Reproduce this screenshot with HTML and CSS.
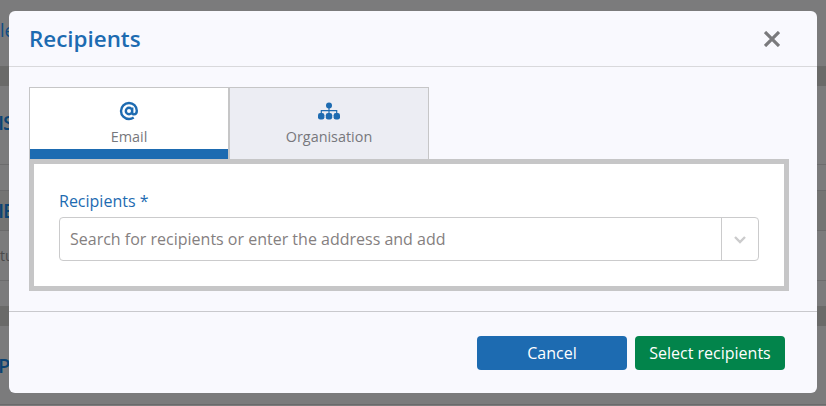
FILE: index.html
```html
<!DOCTYPE html>
<html lang="en">
<head>
<meta charset="utf-8">
<title>Recipients</title>
<link rel="stylesheet" href="styles.css">
</head>
<body>
<div class="page">
  <div class="row row-a"><span class="bg-text bg-small">le</span></div>
  <div class="band"></div>
  <div class="row row-b"><span class="bg-text bg-bold">IS</span></div>
  <div class="band-tall"><span class="bg-text bg-bold">IE</span></div>
  <div class="row row-c"><span class="bg-text bg-muted">tu</span></div>
  <div class="band"></div>
  <div class="row row-d"><span class="bg-text bg-bold">P</span></div>
</div>
<div class="modal">
  <header class="modal-header">
    <h1 class="modal-title">Recipients</h1>
    <button class="close" type="button" aria-label="Close">
      <svg viewBox="0 0 16 16" width="16" height="16"><path d="M1 1 15 15M15 1 1 15" fill="none" stroke="#7a7a7d" stroke-width="3.200"/></svg>
    </button>
  </header>
  <div class="modal-body">
    <div class="tabs">
      <div class="tab tab-active">
        <svg class="tab-icon" viewBox="0 0 20 20" width="20" height="20"><path d="M13.200 10a3.200 3.200 0 1 1-6.400 0 3.200 3.200 0 0 1 6.400 0Zm0-3.500v4.700c0 1.500.8 2.200 1.800 2.200 1.400 0 2.800-1.300 2.800-3.600C17.800 5.200 14.200 2 10 2a8 8 0 0 0 0 16c1.900 0 3.400-.5 4.700-1.400" fill="none" stroke="#1d6bb1" stroke-width="2.400"/></svg>
        <span class="tab-label">Email</span>
      </div>
      <div class="tab">
        <svg class="tab-icon" viewBox="0 0 22 20" width="22" height="20"><circle cx="11" cy="4.500" r="3" fill="#1d6bb1"/><path d="M11 7v6M3.300 13v-3.400h15.400V13" fill="none" stroke="#1d6bb1" stroke-width="1.200"/><rect x="0" y="12" width="6.400" height="6.400" rx="2.200" fill="#1d6bb1"/><rect x="7.800" y="12" width="6.400" height="6.400" rx="2.200" fill="#1d6bb1"/><rect x="15.600" y="12" width="6.400" height="6.400" rx="2.200" fill="#1d6bb1"/></svg>
        <span class="tab-label">Organisation</span>
      </div>
    </div>
    <div class="panel">
      <label class="field-label" for="recipients">Recipients *</label>
      <div class="select">
        <input class="select-input" id="recipients" type="text" placeholder="Search for recipients or enter the address and add">
        <span class="select-toggle">
          <svg viewBox="0 0 14 9" width="14" height="9"><path d="M2 2 7 7 12 2" fill="none" stroke="#cbcbcc" stroke-width="2.400"/></svg>
        </span>
      </div>
    </div>
  </div>
  <footer class="modal-footer">
    <button class="btn btn-blue" type="button">Cancel</button>
    <button class="btn btn-green" type="button">Select recipients</button>
  </footer>
</div>
</body>
</html>
```

FILE: styles.css
```css
* {
  box-sizing: border-box;
}

html,
body {
  margin: 0;
  height: 100%;
  overflow: hidden;
}

body {
  background: #7b7b7c;
  font-family: "Open Sans", "Noto Sans", sans-serif;
}

.page {
  height: 405px;
  border-bottom: 1px solid #6a6a6b;
  display: flex;
  flex-direction: column;
}

.row {
  display: flex;
  align-items: center;
  flex-shrink: 0;
}

.row-a {
  height: 66px;
  padding-bottom: 6px;
}

.row-b {
  height: 79px;
  padding-bottom: 6px;
  border-bottom: 1px solid #6c6c6d;
}

.band {
  height: 20px;
  background: #6a6a69;
  flex-shrink: 0;
}

.band-tall {
  height: 41px;
  margin-top: 25px;
  background: #747473;
  border-top: 1px solid #6a6a6b;
  border-bottom: 1px solid #6a6a6b;
  display: flex;
  align-items: center;
  flex-shrink: 0;
}

.row-c {
  height: 50px;
  margin-bottom: 25px;
  border-bottom: 1px solid #6c6c6d;
}

.row-d {
  height: 78px;
}

.bg-text {
  color: #0f4d84;
  white-space: nowrap;
}

.bg-small {
  font-size: 18px;
}

.bg-bold {
  font-size: 20px;
  font-weight: 600;
  color: #0b4373;
  margin-left: -2px;
  letter-spacing: -1px;
}

.bg-muted {
  font-size: 14px;
  color: #4a4a4b;
}

.modal {
  position: absolute;
  left: 9px;
  top: 11px;
  width: 808px;
  height: 382px;
  background: #f9f9fe;
  border-radius: 6px;
  display: flex;
  flex-direction: column;
}

.modal-header {
  height: 56px;
  border-bottom: 1px solid #d9d9dc;
  padding: 0 37px 0 20px;
  display: flex;
  align-items: center;
  justify-content: space-between;
  flex-shrink: 0;
}

.modal-title {
  margin: 0;
  font-size: 22.400px;
  font-weight: 600;
  color: #1d6bb1;
}

.close {
  border: 0;
  background: none;
  padding: 0;
  display: flex;
}

.modal-body {
  height: 245px;
  padding: 20px 28px 0 20px;
  border-bottom: 1px solid #c9c9cd;
  flex-shrink: 0;
}

.tabs {
  display: flex;
}

.tab {
  width: 200px;
  height: 72px;
  border: 1px solid #c6c6c7;
  border-bottom: 0;
  background: #ecedf3;
  display: flex;
  flex-direction: column;
  align-items: center;
}

.tab-active {
  background: #fff;
  box-shadow: inset 0 -10px 0 #1d6bb1;
}

.tab-icon {
  margin-top: 13px;
  height: 20px;
}

.tab-label {
  margin-top: 6px;
  font-size: 14.400px;
  line-height: 20px;
  color: #77777c;
}

.panel {
  height: 132px;
  border: 5px solid #c6c6c7;
  background: #fff;
  padding: 26px 25px 0;
}

.field-label {
  display: block;
  font-size: 16px;
  line-height: 22px;
  color: #1d6bb1;
  margin-bottom: 5px;
}

.select {
  height: 44px;
  display: flex;
  border: 1px solid #cbcbcc;
  border-radius: 4px;
  background: #fff;
}

.select-input {
  flex: 1;
  min-width: 0;
  border: 0;
  outline: 0;
  background: none;
  padding: 0 10px;
  font: 16px "Open Sans", "Noto Sans", sans-serif;
  color: #7a7a7d;
}

.select-input::placeholder {
  color: #85807f;
  opacity: 1;
}

.select-toggle {
  width: 37px;
  border-left: 1px solid #cbcbcc;
  display: flex;
  align-items: center;
  justify-content: center;
}

.modal-footer {
  flex: 1;
  display: flex;
  justify-content: flex-end;
  gap: 8px;
  padding: 24px 32px 0 0;
}

.btn {
  width: 150px;
  height: 34px;
  border: 0;
  border-radius: 4px;
  color: #fff;
  font: 16px "Open Sans", "Noto Sans", sans-serif;
  padding: 0;
}

.btn-blue {
  background: #1d6bb1;
}

.btn-green {
  background: #02844b;
}
```
